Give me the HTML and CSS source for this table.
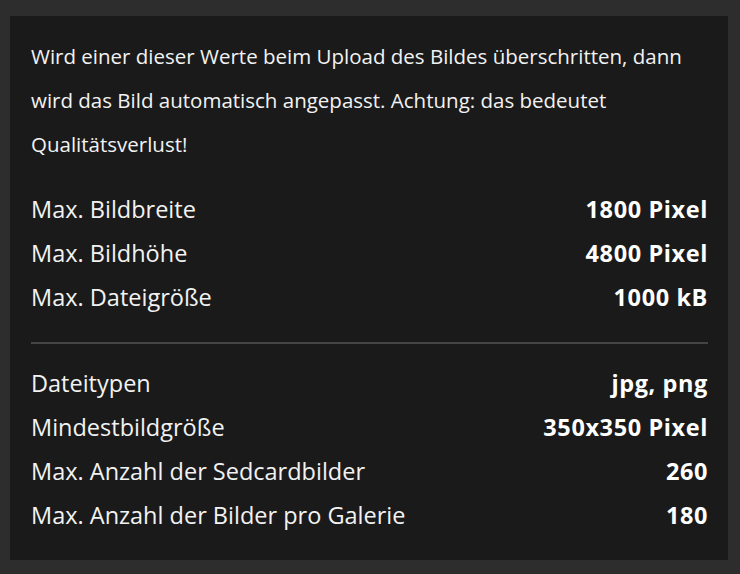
FILE: index.html
```html
<!DOCTYPE html>
<html>

<head>
    <title>Bild-Upload</title>
    <link rel="stylesheet" href="styles.css">
</head>

<body>
    <div class="upload-info">
        <p class="intro">
            Wird einer dieser Werte beim Upload des Bildes überschritten, dann
            wird das Bild automatisch angepasst. Achtung: das bedeutet
            Qualitätsverlust!
        </p>

        <div class="limit-list">
            <div class="limit-row"><span>Max. Bildbreite</span><strong>1800 Pixel</strong></div>
            <div class="limit-row"><span>Max. Bildhöhe</span><strong>4800 Pixel</strong></div>
            <div class="limit-row"><span>Max. Dateigröße</span><strong>1000 kB</strong></div>
        </div>

        <hr class="divider">

        <div class="limit-list">
            <div class="limit-row"><span>Dateitypen</span><strong>jpg, png</strong></div>
            <div class="limit-row"><span>Mindestbildgröße</span><strong>350x350 Pixel</strong></div>
            <div class="limit-row"><span>Max. Anzahl der Sedcardbilder</span><strong>260</strong></div>
            <div class="limit-row"><span>Max. Anzahl der Bilder pro Galerie</span><strong>180</strong></div>
        </div>
    </div>
</body>

</html>
```

FILE: styles.css
```css
body {
    font-family: 'Open Sans', sans-serif;
    background: #2d2d2d;
    color: #f2f2f2;
    margin: 0;
    padding: 16px 12px 14px 10px;
}

.upload-info {
    background: #1a1a1a;
    padding: 18px 20px 23px 21px;
}

.intro {
    margin: 0;
    font-size: 20.5px;
    line-height: 44px;
}

.limit-list {
    margin-top: 21px;
}

.limit-row {
    display: flex;
    justify-content: space-between;
    font-size: 23.5px;
    line-height: 44px;
}

.limit-row strong {
    font-weight: 700;
    letter-spacing: 0.6px;
    color: #fff;
}

.divider {
    border: none;
    height: 2px;
    background: #444;
    margin: 23px 0 17px;
}

.divider + .limit-list {
    margin-top: 0;
}
```
